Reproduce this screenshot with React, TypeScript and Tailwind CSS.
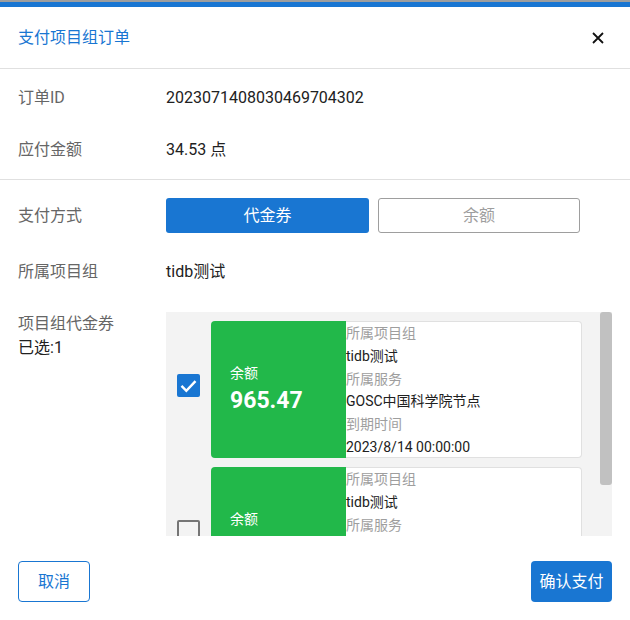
import React from "react";

const font = { fontFamily: "Roboto, 'Noto Sans CJK SC', sans-serif" };

function Checkbox({ checked }: { checked: boolean }) {
  if (checked) {
    return (
      <div className="flex h-[23px] w-[23px] items-center justify-center rounded-[2px] bg-[#1976d2]">
        <svg width="21" height="21" viewBox="0 0 24 24" fill="none">
          <polyline points="4,12.5 9.5,18 20,7" stroke="white" strokeWidth="2.8" />
        </svg>
      </div>
    );
  }
  return <div className="h-[23px] w-[23px] rounded-[2px] border-2 border-[#757575] bg-transparent" />;
}

function VoucherCard({ checked, amount }: { checked: boolean; amount: string }) {
  const rows = [
    ["所属项目组", "tidb测试"],
    ["所属服务", "GOSC中国科学院节点"],
    ["到期时间", "2023/8/14 00:00:00"],
  ];
  return (
    <div className="flex items-center">
      <div className="flex w-[45px] shrink-0 justify-start pl-[11px] -mt-[8px]">
        <Checkbox checked={checked} />
      </div>
      <div className="flex h-[137px] w-[371px] shrink-0">
        <div className="flex w-[135px] shrink-0 flex-col justify-center rounded-l-[4px] bg-[#22b84a] pl-[19px] text-white">
          <div className="text-[14px] leading-[22px]">余额</div>
          <div className="text-[23px] font-bold leading-[34px]">{amount}</div>
        </div>
        <div className="flex flex-1 flex-col rounded-r-[4px] border border-l-0 border-[#e0e0e0] bg-white text-[14px] leading-[22.8px]">
          {rows.map(([k, v]) => (
            <React.Fragment key={k}>
              <div className="text-[#9e9e9e]">{k}</div>
              <div className="text-[#212121]">{v}</div>
            </React.Fragment>
          ))}
        </div>
      </div>
    </div>
  );
}

export default function App() {
  return (
    <div className="h-[620px] w-[630px] overflow-hidden bg-white" style={font}>
      <div className="h-[2px] bg-[#9e9e9e]" />
      <div className="h-[5px] bg-[#1976d2]" />

      <div className="flex h-[62px] items-center justify-between border-b border-[#e0e0e0] pl-[18px] pr-[26px]">
        <div className="text-[16px] text-[#1976d2]">支付项目组订单</div>
        <svg width="12" height="12" viewBox="0 0 12 12">
          <path d="M1 1L11 11M11 1L1 11" stroke="#111" strokeWidth="1.8" />
        </svg>
      </div>

      <div className="border-b border-[#e0e0e0] px-[18px] py-[3px] text-[16px]">
        <div className="flex h-[52px] items-center">
          <div className="w-[148px] text-[#666]">订单ID</div>
          <div className="text-[#212121]">2023071408030469704302</div>
        </div>
        <div className="flex h-[52px] items-center">
          <div className="w-[148px] text-[#666]">应付金额</div>
          <div className="text-[#212121]">34.53 点</div>
        </div>
      </div>

      <div className="px-[18px] pt-[18px] text-[16px]">
        <div className="flex h-[35px] items-center">
          <div className="w-[148px] text-[#666]">支付方式</div>
          <div className="flex gap-[9px]">
            <div className="flex h-[35px] w-[203px] items-center justify-center rounded-[3px] bg-[#1976d2] text-white">代金券</div>
            <div className="flex h-[35px] w-[202px] items-center justify-center rounded-[3px] border border-[#9e9e9e] text-[#9e9e9e]">余额</div>
          </div>
        </div>
        <div className="mt-[27px] flex h-[24px] items-center">
          <div className="w-[148px] text-[#666]">所属项目组</div>
          <div className="text-[#212121]">tidb测试</div>
        </div>
        <div className="mt-[28px] flex">
          <div className="w-[148px] leading-[24px]">
            <div className="text-[#666]">项目组代金券</div>
            <div className="text-[#212121]">已选:1</div>
          </div>
          <div className="flex h-[224px] flex-1 overflow-hidden bg-[#f3f3f3]">
            <div className="flex flex-1 flex-col gap-[9px] pt-[9px]">
              <VoucherCard checked amount="965.47" />
              <VoucherCard checked={false} amount="500.00" />
            </div>
            <div className="w-[12px] shrink-0">
              <div className="h-[173px] rounded-[3px] bg-[#c1c1c1]" />
            </div>
          </div>
        </div>
      </div>

      <div className="mt-[25px] flex justify-between px-[18px] text-[16px]">
        <div className="flex h-[41px] w-[72px] items-center justify-center rounded-[4px] border border-[#1976d2] text-[#1976d2]">取消</div>
        <div className="flex h-[41px] w-[81px] items-center justify-center rounded-[4px] bg-[#1976d2] text-white">确认支付</div>
      </div>
    </div>
  );
}
